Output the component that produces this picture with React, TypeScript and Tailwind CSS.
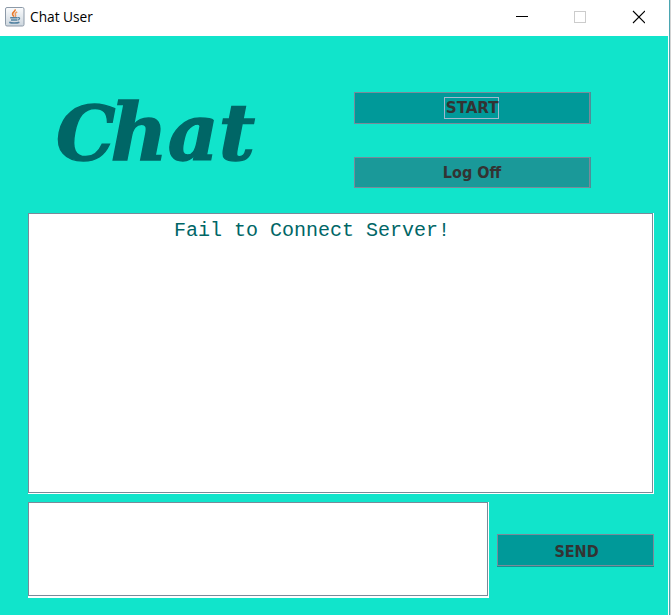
import React from "react";

function JavaIcon() {
  return (
    <svg width="20" height="20" viewBox="0 0 20 20" fill="none">
      <defs>
        <linearGradient id="tile" x1="0" y1="0" x2="0" y2="1">
          <stop offset="0" stopColor="#fbfcfd" />
          <stop offset="1" stopColor="#cdd6de" />
        </linearGradient>
      </defs>
      <rect x="0.5" y="0.5" width="18.5" height="18.5" rx="1.5" fill="url(#tile)" stroke="#8d9aa8" />
      <path d="M10.2 2.4C10.8 4.6 6.2 5.6 7.8 8L9 9.6" stroke="#e8792b" strokeWidth="1.5" />
      <path d="M12.2 5C9.8 6 9.9 7 10.6 8C11 8.7 10.4 9.4 9.9 9.7" stroke="#ee9a5c" strokeWidth="1.4" />
      <path d="M5.2 10.8H12.6M6 13H12.2M4.3 15.2C6.5 16.3 12 16.3 14.4 15.2" stroke="#5382a1" strokeWidth="1.6" />
      <path d="M12.8 10.6C15.4 10.1 15.1 12.5 12.6 13.1" stroke="#5382a1" strokeWidth="1.2" />
    </svg>
  );
}

function TitleBar() {
  return (
    <header className="flex h-9 items-start bg-white">
      <div className="ml-[5px] mt-[7px]">
        <JavaIcon />
      </div>
      <h1 className="ml-[5px] mt-[7px] w-[90px] origin-left scale-x-[0.945] whitespace-nowrap font-['Open_Sans',sans-serif] text-[14.5px] leading-5 text-black">
        Chat User
      </h1>
      <svg className="ml-auto mr-[23px] mt-[10px]" width="130" height="14" fill="none" shapeRendering="crispEdges">
        <path d="M1 6.5H13" stroke="#000" />
        <rect x="59.5" y="1.5" width="11" height="11" stroke="#ccc" />
        <path d="M118 1L130 13M130 1L118 13" stroke="#000" strokeWidth="1.1" shapeRendering="auto" />
      </svg>
    </header>
  );
}

const buttonText = "font-['DejaVu_Sans_Condensed','DejaVu_Sans',sans-serif] text-[16px] font-bold leading-5 text-[#333] [font-stretch:condensed]";

export default function App() {
  return (
    <div className="flex h-[615px] w-[671px] overflow-hidden bg-white">
      <div className="flex w-[668px] flex-col">
        <TitleBar />
        <main className="flex grow flex-col bg-[#11e4cb] pl-7">
          <div className="flex h-[177px]">
            <h2 className="mt-[49px] w-[326px] pl-[28px]">
              <span className="inline-block origin-left scale-x-[1.01] whitespace-nowrap font-['DejaVu_Serif',serif] text-[78px] font-bold italic leading-[96px] text-[#006666] [-webkit-text-stroke:1.4px_#006666]">
                <span className="text-[74px] leading-none tracking-[-5px]">C</span>hat
              </span>
            </h2>
            <div className="flex flex-col gap-[33px] pt-14">
              <button className="flex h-8 w-[237px] border-r border-[#4b8f98] bg-[#009999]">
                <span className="flex h-8 w-[236px] items-center justify-center border border-[#7a8a99] pr-[1px]">
                  <span className={`flex h-[22px] w-[55px] items-center justify-center border border-[#a3b8cc] pl-px ${buttonText}`}>
                    <span className="scale-x-[1.05]">START</span>
                  </span>
                </span>
              </button>
              <button className="flex h-[31px] w-[237px] border-r border-[#4b8f98] bg-[#1a9999]">
                <span className={`flex h-[31px] w-[236px] items-center justify-center border border-[#7a8a99] ${buttonText}`}>
                  <span>Log Off</span>
                </span>
              </button>
            </div>
          </div>
          <section className="flex h-[281px] w-[626px] border-b border-r border-white bg-white">
            <div className="h-[280px] w-[625px] border border-[#7a8a99] pl-[145px] pt-[5px]">
              <p className="whitespace-pre font-['Liberation_Mono',monospace] text-[20px] leading-6 text-[#006666]">
                Fail to Connect Server!
              </p>
            </div>
          </section>
          <div className="mt-2 flex gap-2">
            <section className="h-24 w-[461px] bg-white">
              <div className="h-[94px] w-[460px] border border-[#7a8a99]" />
            </section>
            <button className="mt-8 h-[33px] w-[157px] border-b border-[#159191] bg-[#009999]">
              <span className={`flex h-8 items-center justify-center border border-[#7a8a99] pl-0.5 pt-1 ${buttonText}`}>
                SEND
              </span>
            </button>
          </div>
        </main>
      </div>
      <div className="ml-px w-px bg-[#4aa6b2]" />
      <div className="w-px bg-[#d3d3d3]" />
    </div>
  );
}
